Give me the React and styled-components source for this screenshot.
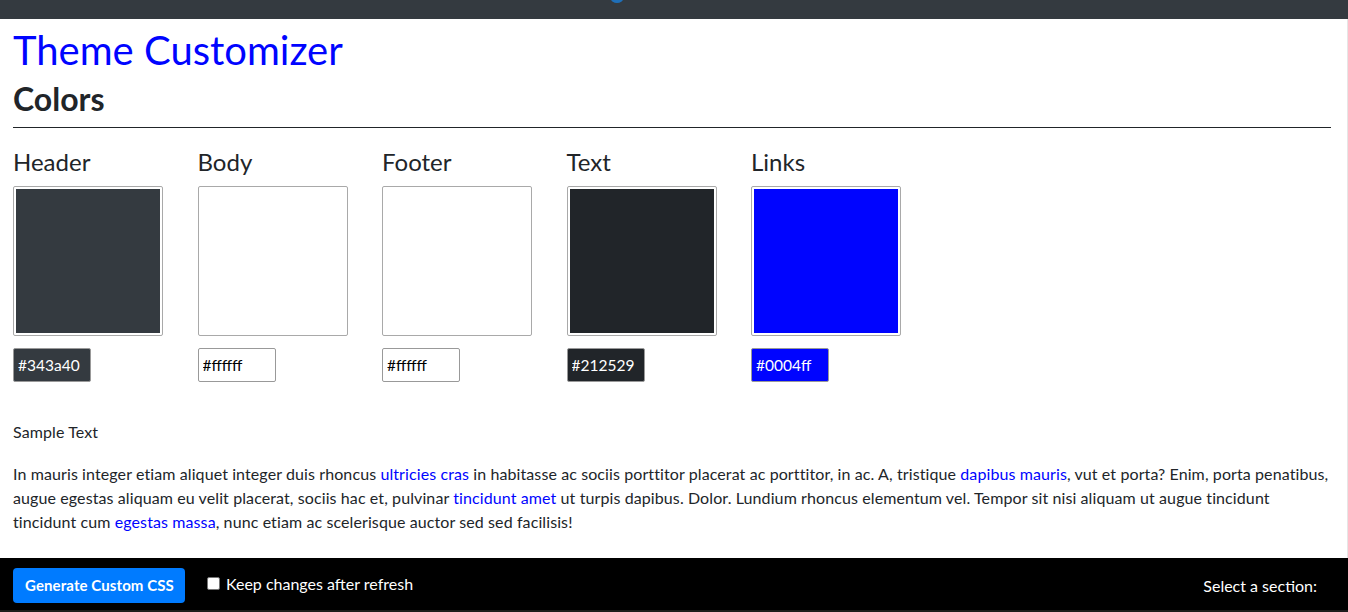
import React from "react";
import styled, { createGlobalStyle } from "styled-components";

const Global = createGlobalStyle`
  html, body { margin: 0; padding: 0; background: #fff; }
  body { font-family: "Lato", "Noto Sans", sans-serif; color: #212529; }
  * { box-sizing: border-box; }
`;

const Page = styled.div`
  display: flex;
  flex-direction: column;
  height: 612px;
  overflow: hidden;
`;

const TopBar = styled.div`
  position: relative;
  height: 19px;
  background: #343a40;
  flex: none;
`;

const Dot = styled.span`
  position: absolute;
  left: 611px;
  top: -5px;
  width: 12px;
  height: 8px;
  border-radius: 50%;
  background: #1f6fb8;
`;

const Main = styled.main`
  flex: 1;
  padding: 0 16px 0 13px;
  border-right: 1px solid #e6e6e6;
`;

const Title = styled.h1`
  margin: 4px 0 0;
  font-size: 40px;
  font-weight: 400;
  line-height: 54px;
  color: #0004ff;
`;

const SectionTitle = styled.h2`
  margin: 0;
  font-size: 32px;
  font-weight: 700;
  line-height: 44px;
`;

const Rule = styled.hr`
  margin: 6px 0 0;
  border: 0;
  border-top: 1px solid #212529;
`;

const Swatches = styled.div`
  display: grid;
  grid-template-columns: repeat(5, 184.5px);
  margin-top: 19px;
`;

const Field = styled.div`
  display: flex;
  flex-direction: column;
`;

const Label = styled.label`
  font-size: 24px;
  line-height: 30px;
  margin-bottom: 9px;
`;

const Swatch = styled.div`
  width: 150px;
  height: 150px;
  border: 1px solid #a9a9a9;
  border-radius: 2px;
  padding: 2px;
  background: #fff;
`;

const SwatchFill = styled.div`
  width: 100%;
  height: 100%;
  background: ${(p) => p.$color};
`;

const HexInput = styled.input`
  margin-top: 12px;
  width: 78px;
  height: 34px;
  border: 1px solid #999;
  border-radius: 2px;
  padding: 0 4px;
  font-family: "Lato", "Noto Sans", sans-serif;
  font-size: 15.5px;
  background: ${(p) => p.$color};
  color: ${(p) => (p.$light ? "#000" : "#fff")};
  outline: none;
`;

const Caption = styled.p`
  margin: 38px 0 0;
  font-size: 16px;
  line-height: 24px;
  letter-spacing: 0.1px;
`;

const Paragraph = styled.p`
  margin: 18px 0 0;
  font-size: 16px;
  line-height: 24px;
  letter-spacing: 0.1px;
`;

const Link = styled.a`
  color: #0004ff;
  text-decoration: none;
`;

const Footer = styled.footer`
  flex: none;
  height: 54px;
  background: #000;
  border-bottom: 2px solid #1c1c1c;
  display: flex;
  align-items: center;
  padding: 0 31px 0 13px;
  color: #fff;
`;

const Button = styled.button`
  height: 35px;
  padding: 0 11px 0 12px;
  margin-top: 2px;
  border: 0;
  border-radius: 4px;
  background: #007bff;
  color: #fff;
  font-family: "Lato", "Noto Sans", sans-serif;
  font-size: 15px;
  font-weight: 700;
  letter-spacing: 0.1px;
`;

const Check = styled.label`
  display: flex;
  align-items: center;
  gap: 6px;
  margin-left: 22px;
  margin-top: -2px;
  font-size: 16px;
`;

const Box = styled.span`
  width: 13px;
  height: 13px;
  background: #fff;
  border: 1px solid #767676;
  border-radius: 2px;
`;

const Right = styled.div`
  margin-left: auto;
  font-size: 16px;
  margin-top: 2px;
`;

const colors = [
  { name: "Header", hex: "#343a40", light: false },
  { name: "Body", hex: "#ffffff", light: true },
  { name: "Footer", hex: "#ffffff", light: true },
  { name: "Text", hex: "#212529", light: false },
  { name: "Links", hex: "#0004ff", light: false },
];

export default function App() {
  return (
    <Page>
      <Global />
      <TopBar>
        <Dot />
      </TopBar>
      <Main>
        <Title>Theme Customizer</Title>
        <SectionTitle>Colors</SectionTitle>
        <Rule />
        <Swatches>
          {colors.map((c) => (
            <Field key={c.name}>
              <Label>{c.name}</Label>
              <Swatch>
                <SwatchFill $color={c.hex} />
              </Swatch>
              <HexInput readOnly value={c.hex} $color={c.hex} $light={c.light} />
            </Field>
          ))}
        </Swatches>
        <Caption>Sample Text</Caption>
        <Paragraph>
          In mauris integer etiam aliquet integer duis rhoncus <Link>ultricies cras</Link> in habitasse ac
          sociis porttitor placerat ac porttitor, in ac. A, tristique <Link>dapibus mauris</Link>, vut et
          porta? Enim, porta penatibus, augue egestas aliquam eu velit placerat, sociis hac et, pulvinar{" "}
          <Link>tincidunt amet</Link> ut turpis dapibus. Dolor. Lundium rhoncus elementum vel. Tempor sit
          nisi aliquam ut augue tincidunt tincidunt cum <Link>egestas massa</Link>, nunc etiam ac
          scelerisque auctor sed sed facilisis!
        </Paragraph>
      </Main>
      <Footer>
        <Button>Generate Custom CSS</Button>
        <Check>
          <Box />
          Keep changes after refresh
        </Check>
        <Right>Select a section:</Right>
      </Footer>
    </Page>
  );
}
